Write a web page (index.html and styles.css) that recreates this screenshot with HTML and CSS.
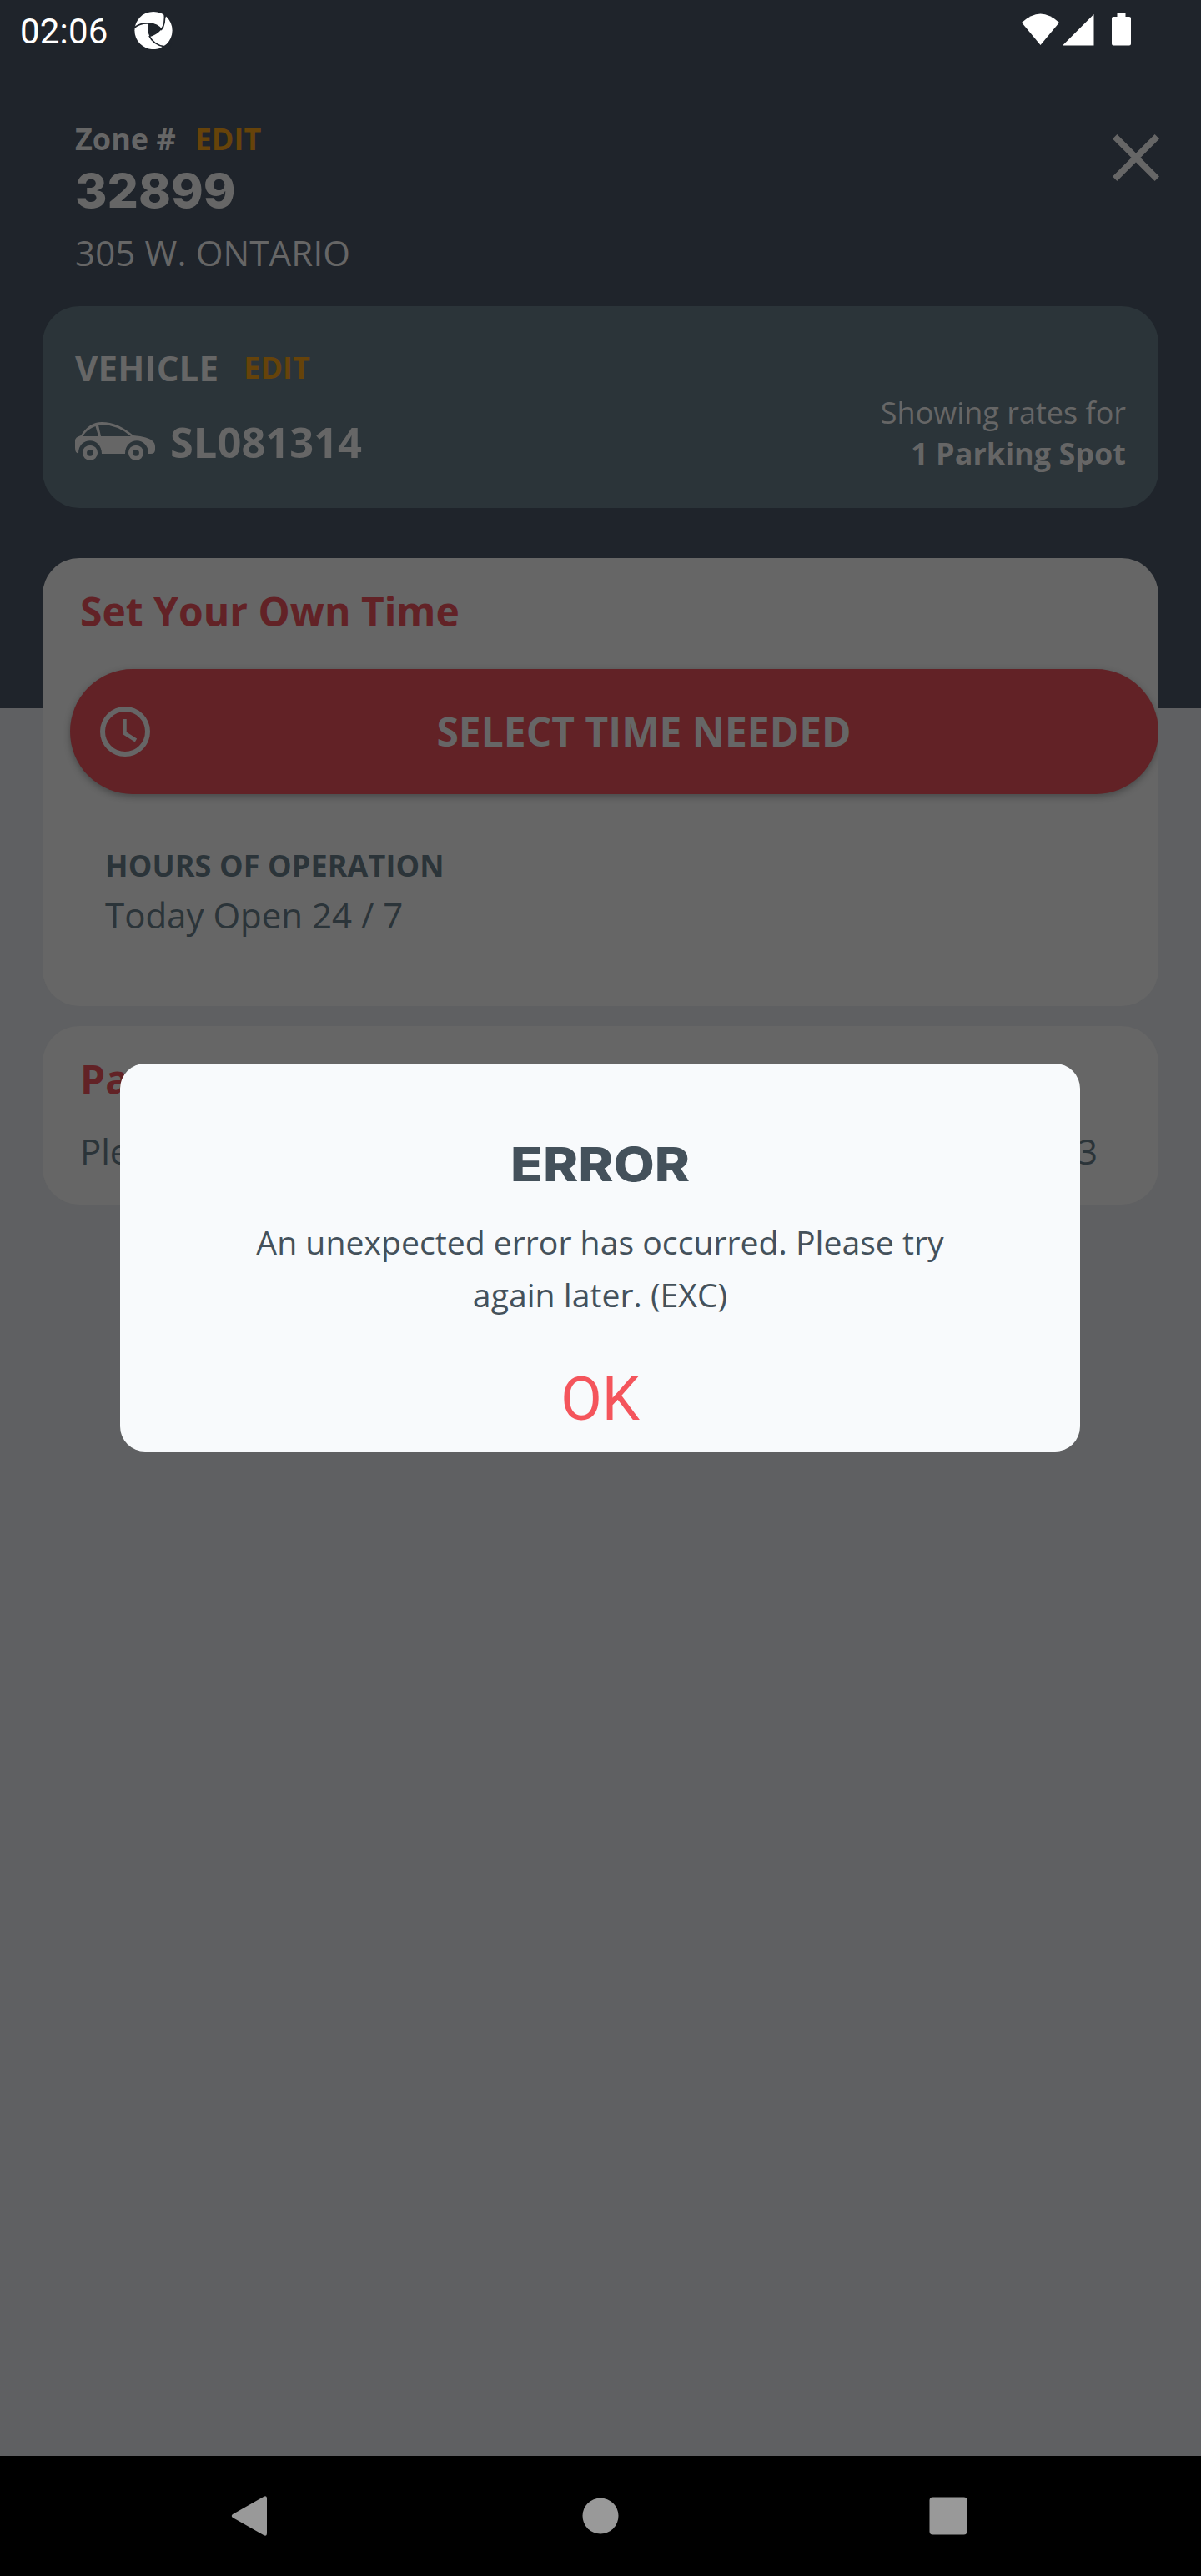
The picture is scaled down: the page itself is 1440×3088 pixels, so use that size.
FILE: index.html
```html
<!DOCTYPE html>
<html lang="en">
<head>
<meta charset="utf-8">
<title>Parking</title>
<link rel="stylesheet" href="styles.css">
</head>
<body>
<div class="screen">
  <header class="status">
    <span class="clock">02:06</span>
    <svg class="status-logo" width="46" height="46" viewBox="161 13 46 46">
      <circle cx="184" cy="36.5" r="22.600" fill="#fff"/>
      <path d="M178 28C182 27 189 30 193.500 35.500C190 39 185 43 179.500 44C177 39 177 33 178 28Z" fill="#1f242b"/>
      <path d="M194.500 14L200 17L198 22L196 15Z" fill="#1f242b"/>
      <path d="M191 58L199 54L206 52L203 60Z" fill="#1f242b"/>
      <g fill="none" stroke="#1f242b" stroke-width="1.800"><path d="M161 33Q169 27 179 28Q189 29 193.500 35.500"/><path d="M193 36Q199 29 197 14"/><path d="M179 43Q184 54 198 56"/></g>
    </svg>
    <svg class="status-icons" width="132" height="40" viewBox="1225 15 132 40" fill="#fff">
      <path d="M1225 27Q1247.500 6 1270 27L1247.500 54Z"/><path d="M1274 54.500L1311.500 17V54.500Z"/>
      <path d="M1339.500 20V16H1349.500V20H1354Q1356 20 1356 22V52.500Q1356 54.500 1354 54.500H1335Q1333 54.500 1333 52.500V22Q1333 20 1335 20Z"/>
    </svg>
  </header>

  <section class="zone">
    <div>
      <div class="zone-label"><span>Zone #</span><span class="edit">EDIT</span></div>
      <div class="zone-number">32899</div>
      <div class="zone-address">305 W. ONTARIO</div>
    </div>
    <svg class="close" width="56" height="56" viewBox="0 0 56 56"><path d="M2.700 2.700L53.300 53.300M53.300 2.700L2.700 53.300" stroke="#666" stroke-width="7.600"/></svg>
  </section>

  <section class="vehicle">
    <div>
      <div class="vehicle-label"><span>VEHICLE</span><span class="edit">EDIT</span></div>
      <div class="plate">
        <svg width="96" height="46" viewBox="0 0 96 46">
          <path fill="#666" fill-rule="evenodd" d="M7 16C12 8 20 0 32 0C46 0 58 6 70 16C80 17 96 19 96 29V33Q96 38 91 38H88C88 17 60 17 60 38H32C32 17 4 17 4 37.500Q0 37 0 31V22Q0 18 7 16ZM9 17H28L24.500 5Q15 8 9 17ZM31 17H67Q49 2 28 3.500Z"/>
          <g fill="none" stroke="#666" stroke-width="5.200"><circle cx="18" cy="36.800" r="6.500"/><circle cx="73" cy="36.800" r="6.500"/></g>
        </svg>
        <span>SL081314</span>
      </div>
    </div>
    <div class="rates">Showing rates for<br><b>1 Parking Spot</b></div>
  </section>

  <section class="card time">
    <h2>Set Your Own Time</h2>
    <div class="select">
      <svg width="60" height="60" viewBox="0 0 60 60" fill="none" stroke="#666"><circle cx="30" cy="30" r="27" stroke-width="6"/><path d="M29.500 15V32L43 40.500" stroke-width="4.500"/></svg>
      <span>SELECT TIME NEEDED</span>
    </div>
    <div class="hours"><b>HOURS OF OPERATION</b><span>Today Open 24 / 7</span></div>
  </section>

  <section class="card notice">
    <h2>Pa</h2>
    <div class="notice-text"><span>Ple</span><span>3</span></div>
  </section>

  <nav class="nav">
    <svg width="1440" height="144" viewBox="0 0 1440 144" fill="#999">
      <path d="M279 70L316 49Q320 47 320 51V93Q320 97 316 95L279 74Q276.500 72 279 70Z"/>
      <circle cx="720" cy="72" r="21.500"/><rect x="1114.500" y="49.500" width="45" height="45" rx="4"/>
    </svg>
  </nav>

  <div class="dialog">
    <h1>ERROR</h1>
    <p>An unexpected error has occurred. Please try<br>again later. (EXC)</p>
    <div class="ok">OK</div>
  </div>
</div>
</body>
</html>
```
FILE: styles.css
```css
* { box-sizing: border-box; }
body { margin: 0; font-family: "Open Sans", sans-serif; color: #666; }
h1, h2, p { margin: 0; }
svg { display: block; flex: none; }
.screen { position: relative; width: 1440px; height: 3088px; display: flex; flex-direction: column; background: linear-gradient(#1f242b 849px, #5f6062 849px); overflow: hidden; }
.status { height: 75px; flex: none; display: flex; align-items: flex-start; padding-left: 24px; }
.clock { font: 42px/49px Roboto, sans-serif; color: #fff; width: 137px; padding-top: 13px; letter-spacing: .2px; }
.status-logo { margin-top: 13px; }
.status-icons { margin: 15px 83px 0 auto; }
.zone { height: 292px; flex: none; display: flex; justify-content: space-between; padding: 67px 50px 0 90px; }
.zone-label { font-size: 36px; line-height: 49px; font-weight: 700; display: flex; }
.zone-label .edit { margin-left: 23px; }
.edit { color: #66430a; font-size: 36px; font-weight: 700; }
.zone-number { font: 800 57px/69px Inter, sans-serif; width: max-content; margin-top: 3px; transform: scaleX(1.03); transform-origin: left; }
.zone-address { font-size: 42px; line-height: 57px; margin-top: 11px; letter-spacing: .15px; }
.close { margin-top: 19px; }
.vehicle { height: 242px; flex: none; margin: 0 51px; border-radius: 44px; background: #2b3439; display: flex; justify-content: space-between; padding: 45px 39px 0; }
.vehicle-label { font-size: 42px; line-height: 57px; font-weight: 700; display: flex; letter-spacing: .2px; }
.vehicle-label .edit { margin-left: 30px; line-height: 57px; letter-spacing: 0; }
.plate { display: flex; font-size: 50.6px; line-height: 68px; font-weight: 700; gap: 18px; margin-top: 24px; }
.plate svg { margin-top: 13px; }
.plate span { padding-top: 3px; }
.rates { text-align: right; font-size: 36px; line-height: 49px; padding-top: 58px; }
.card { flex: none; margin: 0 51px; border-radius: 44px; background: #666; color: #2b3439; }
.card h2 { color: #622226; font-size: 48px; line-height: 65px; font-weight: 700; }
.time { height: 537px; margin-top: 60px; padding-top: 31px; }
.time h2, .notice h2 { padding-left: 45px; }
.select { height: 150px; margin: 37px 0 0 33px; border-radius: 75px; background: #622226; color: #666; display: flex; align-items: center; padding: 0 36px; font-size: 48px; font-weight: 700; box-shadow: 0 3px 8px rgba(0,0,0,.3); clip-path: inset(-20px 0 -20px -20px); }
.select span { flex: 1; text-align: center; padding: 0 0 2px 11px; }
.hours { padding: 61px 0 0 75px; display: flex; flex-direction: column; font-size: 42px; line-height: 57px; }
.hours b { font-size: 36px; line-height: 49px; margin-bottom: 6px; letter-spacing: .1px; }
.notice { height: 214px; margin-top: 24px; padding-top: 31px; }
.notice-text { display: flex; justify-content: space-between; padding: 25px 73px 0 45px; font-size: 42px; line-height: 57px; }
.nav { height: 144px; flex: none; margin-top: auto; background: #000; }
.dialog { position: absolute; left: 144px; top: 1275px; width: 1151px; height: 465px; border-radius: 30px; background: #f8fafc; color: #44515b; text-align: center; }
.dialog h1 { font: 800 57px/69px Inter, sans-serif; margin-top: 86px; transform: scaleX(1.12); }
.dialog p { font-size: 39.2px; line-height: 63px; margin-top: 27px; }
.ok { font: 72px/84px Roboto, sans-serif; color: #f4555c; margin-top: 53px; }
```
